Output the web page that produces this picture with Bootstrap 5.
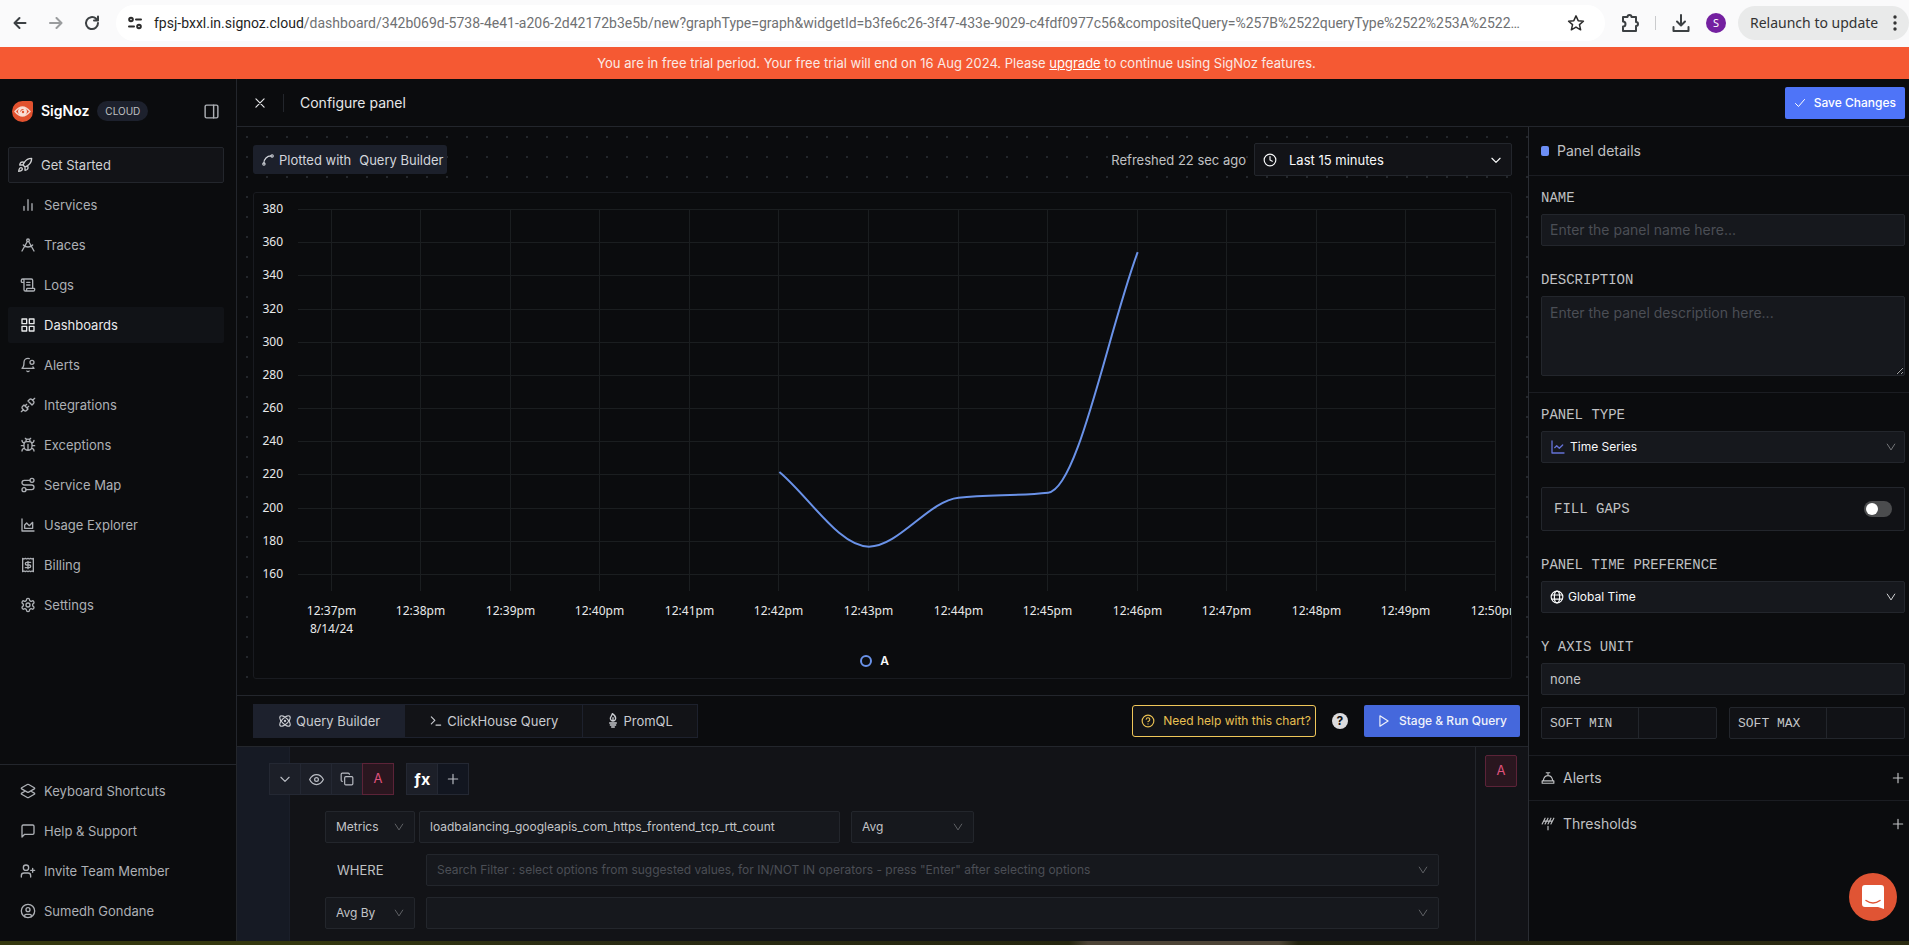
<!DOCTYPE html>
<html lang="en">
<head>
<meta charset="utf-8">
<meta name="viewport" content="width=device-width, initial-scale=1">
<title>SigNoz – Configure panel</title>
<link href="https://cdn.jsdelivr.net/npm/bootstrap@5.3.0/dist/css/bootstrap.min.css" rel="stylesheet">
<style>
:root{--ink:#0b0c0e;--slate:#121317;--field:#16181d;--line:#1d212d;--line2:#23262c;--txt:#c0c1c3;--robin:#4e74f8;--cherry:#e0527e}
body{font:14px/20px Inter,"Liberation Sans",sans-serif;color:var(--txt);background:var(--ink)}
.ic{fill:none;stroke:currentColor;stroke-width:2;stroke-linecap:round;stroke-linejoin:round;flex:none}
.t12{font-size:12px}
.t13{font-size:13px}
.mono{font-family:"Liberation Mono",monospace}
/* browser toolbar */
.browser{height:47px;padding-bottom:2px;background:#fafafb;color:#3c4043;font-family:"Noto Sans",sans-serif}
.navs{gap:20px}
.address{background:#fff;border-radius:18px;height:36px;color:#6f7173;min-width:0;font-family:Roboto,sans-serif}
.address .host{color:#1f1f1f}
.address svg{color:#2b2b2b}
.avatar{width:20px;height:20px;background:#7420a0;color:#fff;font-size:11px}
.relaunch{background:#e9eaea;border-radius:17px;height:34px;width:171px;padding:0 12px;color:#333;border:0;font-size:14px}
.trial{height:32px;background:#f55933;color:#fbeae5;font-size:13px}
.trial a{color:#fff}
/* sidebar */
.sidebar{width:237px;border-right:1px solid var(--line2)}
.brand{height:64px;color:#fff;font-weight:600;font-size:14px}
.cloud{background:#1d212d;border-radius:10px;font-size:10px;height:20px;color:#c0c1c3;font-weight:400}
.side-link{height:36px;color:#adb0b5;border-radius:2px;font-size:13px;text-decoration:none}
.side-link.on{background:#111317;color:#e9eaec}
.start{background:var(--slate);border:1px solid var(--line2);color:#d0d1d3}
.side-foot{border-top:1px solid var(--line2);padding:8px 8px 12px}
/* header */
.head{height:48px;border-bottom:1px solid var(--line2);color:#e6e7e9}
.flat{border-radius:2px;font-size:12px;line-height:20px;height:32px}
.save{background:var(--robin);color:#fff}
.run{background:#4568dc;color:#f0f2fa}
.close-x{background:none;border:0;color:#e6e7e9}
.head .bar{width:1px;height:18px;background:var(--line2)}
/* canvas */
.dots{background:radial-gradient(#24272c 1px,transparent 1px) 0 0/20px 20px}
.plotted{background:#1c202b;border-radius:3px;height:29px;font-size:13px;color:#d2d5db}
.range{width:258px;height:33px;background:var(--slate);border:1px solid var(--line2);border-radius:2px}
.chart{border:1px solid #191b20;background:var(--ink);border-radius:3px;height:487px;overflow:hidden}
.chart text{font:12px "Noto Sans",sans-serif;fill:#e8e9ea}
.ring{width:12px;height:12px;border:2px solid #6a92e8;border-radius:50%}
/* query area */
.qbar{height:52px;border-top:1px solid var(--line2);border-bottom:1px solid var(--line2)}
.tabs .btn{height:34px;border:1px solid var(--line);border-radius:0;background:var(--slate);color:#c9cbd0;font-size:13px;line-height:20px;margin-left:-1px}
.tabs .btn.on{background:#1d212d}
.needhelp{border:1px solid #f0c75a;color:#e9c052;background:var(--slate);border-radius:3px}
.qmark{width:16px;height:16px;background:#dcdcde;color:#111;font-size:12px;line-height:16px}
.query{background:var(--slate)}
.gutter{width:53px;background:#161a24;border-right:1px solid #1b1f2a}
.mini{width:32px;height:32px;padding:0;border:1px solid #242833;background:#1c1f28;color:#b9bcc3;border-radius:0;margin-left:-1px;display:flex;align-items:center;justify-content:center}
.mini.red,.tag{background:#2a161f;border:1px solid #5c2338;color:var(--cherry)}
.mini.plus{background:#121620}
.tag{width:32px;height:32px;border-radius:2px;padding:0;font-size:13px}
.rail{width:53px;border-left:1px solid var(--line2);padding:8px 0 0 9px}
.pull{margin-left:-20px;gap:13px}
.qrows{padding:16px 36px 0 35px;gap:11px}
.qline{gap:11px}
.fbox{border:1px solid var(--line2);background:var(--field);border-radius:2px;height:32px;color:#c3c5c8}
.fbox select,.fbox input{background:none;border:0;outline:0;color:inherit;appearance:none;min-width:0;font-size:inherit;padding:0}
.fbox select{cursor:pointer}
.fbox option{background:#16181d}
.query .fbox{font-size:12px;padding:0 10px}
.w-kind{width:90px}.w-agg{width:123px}.w-metric{width:421px}
.fbox input::placeholder,.fbox::placeholder{color:#4b4e55;opacity:1}
/* right panel */
.details{width:381px;border-left:1px solid #2a2d33}
.details .rule{border-bottom:1px solid #1b1d22}
.title{height:49px}
.fold{height:45px}
.dot{width:8px;height:10px;background:#6c8ef5;border-radius:2px}
.details label.mono{line-height:20px;display:block;margin-bottom:6px}
.gaps{height:44px;border:1px solid var(--line2);background:#111216;border-radius:2px}
textarea.fbox{height:80px;display:block;padding:6px 8px;outline:0;resize:vertical}
.sw.form-check-input{width:28px;height:16px;margin:0;background-color:#4b4c4e;border:0;background-image:url("data:image/svg+xml,%3Csvg xmlns='http://www.w3.org/2000/svg' viewBox='-4 -4 8 8'%3E%3Ccircle r='3' fill='%23fff'/%3E%3C/svg%3E")}
.soft{gap:12px;margin-top:12px}
.soft .fbox{flex:1 1 0;min-width:0;background:#111216}
.soft input{width:0}
.details label.softlab{border-right:1px solid var(--line2);width:89px;font-size:13px;margin:0;line-height:32px;height:30px;flex:none}
.bubble{width:48px;height:48px;right:12px;bottom:24px;background:#e05434;border:0}
.desk{height:4px;background:linear-gradient(90deg,#34380f 0,#34380f 16%,#2a2c14 30%,#25260f 56%,#4c4436 57%,#4c4436 67%,#22230f 68%,#2b2b12 100%)}
</style>
</head>
<body class="vh-100 overflow-hidden d-flex flex-column">

<svg class="d-none">
  <symbol id="down" viewBox="0 0 24 24"><path d="m5 9 7 7 7-7"/></symbol>
  <symbol id="anty" viewBox="0 0 24 24"><path d="m3 5 9 14 9-14"/></symbol>
  <symbol id="plus" viewBox="0 0 24 24"><path d="M4 12h16M12 4v16"/></symbol>
</svg>

<div class="browser d-flex align-items-center ps-2 flex-shrink-0">
  <div class="navs d-flex ms-1 me-3">
    <svg class="ic" width="16" height="16" viewBox="0 0 16 16"><path d="M13.500 8H3M7.500 3 2.500 8l5 5"/></svg>
    <svg class="ic" width="16" height="16" viewBox="0 0 16 16" opacity=".5"><path d="M2 8h11M8.500 3l5 5-5 5"/></svg>
    <svg class="ic" width="16" height="16" viewBox="0 0 16 16"><path d="M14 8a6 6 0 1 1-2-4.400L14 5.500M14 1.500v4h-4"/></svg>
  </div>
  <div class="address d-flex align-items-center flex-grow-1 ps-2 pe-3 me-3">
    <svg class="ic me-2 ms-1" width="14" height="14" viewBox="0 0 14 14"><circle cx="3" cy="3.500" r="1.800"/><path d="M8 3.500h5M1 10.500h5"/><circle cx="11" cy="10.500" r="1.800"/></svg>
    <div class="text-truncate flex-grow-1 ps-1"><span class="host">fpsj-bxxl.in.signoz.cloud</span>/dashboard/342b069d-5738-4e41-a206-2d42172b3e5b/new?graphType=graph&amp;widgetId=b3fe6c26-3f47-433e-9029-c4fdf0977c56&amp;compositeQuery=%257B%2522queryType%2522%253A%2522…</div>
    <svg class="ic ms-2 me-1" width="18" height="18" viewBox="0 0 24 24"><path d="m12 2.500 2.900 6.400 7 .7-5.300 4.600 1.600 6.900L12 17.500l-6.200 3.600 1.600-6.900L2.100 9.600l7-.7z"/></svg>
  </div>
  <svg class="ic me-3" width="18" height="20" viewBox="0 0 18 20"><path d="M2 4h4.500a2 2 0 0 1 4 0H15v5a2 2 0 0 1 0 4v5H2v-4.500a2.300 2.300 0 0 0 0-5z"/></svg>
  <div class="vr my-3 me-3 opacity-25"></div>
  <svg class="ic me-3" width="18" height="18" viewBox="0 0 18 18"><path d="M9 1v10M5 7.500l4 4 4-4M1.500 13v4h15v-4"/></svg>
  <div class="avatar rounded-circle d-flex align-items-center justify-content-center me-2">S</div>
  <button class="relaunch d-flex align-items-center justify-content-between ms-1 text-nowrap flex-shrink-0" type="button">
    <span>Relaunch to update</span>
    <svg width="4" height="16" viewBox="0 0 4 16" fill="#333"><circle cx="2" cy="2" r="1.700"/><circle cx="2" cy="8" r="1.700"/><circle cx="2" cy="14" r="1.700"/></svg>
  </button>
</div>

<div class="trial d-flex align-items-center justify-content-center flex-shrink-0 ps-1"><span>You are in free trial period. Your free trial will end on 16 Aug 2024. Please <a href="#">upgrade</a> to continue using SigNoz features.</span></div>

<div class="d-flex flex-grow-1" style="min-height:0">
  <nav class="sidebar d-flex flex-column flex-shrink-0">
    <div class="brand d-flex align-items-center ps-2 pe-3">
      <svg class="ms-1" width="21" height="21" viewBox="0 0 21 21"><path fill="#e2522f" d="M10.500 0H19a2 2 0 0 1 2 2v8.500A10.500 10.500 0 1 1 10.500 0z"/><path d="M3 10.500q7.500-9 15 0-7.500 9-15 0z" fill="#e2522f" stroke="#f7d5cb" stroke-width="1.400"/><circle cx="10.500" cy="10.500" r="4.500" fill="#f9dfd7"/><path d="M8.500 10.500a2.500 2.500 0 0 1 3-2" fill="none" stroke="#e2522f"/><circle cx="11" cy="11" r="1.200" fill="#e2522f"/></svg>
      <span class="ms-2">SigNoz</span>
      <span class="cloud px-2 ms-2 d-flex align-items-center">CLOUD</span>
      <svg class="ic ms-auto" width="17" height="17" viewBox="0 0 24 24" color="#adb0b5"><rect x="3" y="3" width="18" height="18" rx="2"/><path d="M15 3v18"/></svg>
    </div>
    <div class="px-2 pt-1 d-flex flex-column gap-1">
      <a href="#" class="side-link start d-flex align-items-center ps-2 me-1"><svg class="ic" width="16" height="16" viewBox="0 0 24 24"><path d="M4.500 16.500c-1.500 1.260-2 5-2 5s3.740-.5 5-2c.71-.84.7-2.130-.09-2.910a2.180 2.180 0 0 0-2.910-.09zM12 15l-3-3a22 22 0 0 1 2-3.950A12.880 12.880 0 0 1 22 2c0 2.720-.78 7.500-6 11a22.350 22.350 0 0 1-4 2zM9 12H4s.55-3.030 2-4c1.620-1.080 5 0 5 0M12 15v5s3.030-.55 4-2c1.080-1.620 0-5 0-5"/></svg><span class="ms-2">Get Started</span></a>
      <div id="menu" class="d-flex flex-column gap-1 me-1"></div>
    </div>
    <div id="foot" class="side-foot mt-auto d-flex flex-column gap-1"></div>
  </nav>

  <div class="flex-grow-1 d-flex flex-column" style="min-width:0">
    <header class="head d-flex align-items-center flex-shrink-0 ps-3 pe-1">
      <button class="close-x d-flex p-0" type="button" aria-label="Close"><svg class="ic" width="14" height="14" viewBox="0 0 24 24"><path d="m5 5 14 14M19 5 5 19"/></svg></button>
      <div class="bar ms-3"></div>
      <span class="ms-3">Configure panel</span>
      <button class="btn flat save ms-auto py-0 px-2 d-flex align-items-center gap-1 fw-medium" type="button"><svg class="ic me-1" width="12" height="12" viewBox="0 0 24 24"><path d="M3 13l6 6L21 5"/></svg>Save Changes</button>
    </header>

    <div class="d-flex flex-grow-1" style="min-height:0">
      <main class="flex-grow-1 d-flex flex-column" style="min-width:0">
        <section class="dots px-3 pt-3 pb-3 flex-shrink-0">
          <div class="d-flex align-items-center justify-content-between mb-3">
            <div class="plotted d-flex align-items-center ps-1 pe-1"><svg class="ic mx-1" width="14" height="14" viewBox="0 0 24 24"><circle cx="19" cy="5" r="2"/><circle cx="5" cy="19" r="2"/><path d="M5 17A12 12 0 0 1 17 5"/></svg>Plotted with<span class="ms-2">Query Builder</span></div>
            <div class="d-flex align-items-center gap-2 t13">
              <span>Refreshed 22 sec ago</span>
              <button type="button" class="range d-flex align-items-center px-2 text-light"><svg class="ic" width="14" height="14" viewBox="0 0 24 24"><circle cx="12" cy="12" r="10"/><path d="M12 6v6l4 2"/></svg><span class="ms-2 ps-1">Last 15 minutes</span><svg class="ic ms-auto" width="14" height="14"><use href="#down"/></svg></button>
            </div>
          </div>
          <div class="chart d-flex flex-column">
            <svg id="plot" width="100%" height="458"></svg>
            <div class="d-flex justify-content-center align-items-center gap-2 pe-3 fw-semibold t12 text-light"><span class="ring"></span>A</div>
          </div>
        </section>

        <div class="qbar d-flex align-items-center flex-shrink-0 ps-3 pe-2">
          <div class="tabs d-flex">
            <button type="button" class="btn on ms-0 px-4 py-0 d-flex align-items-center gap-1"><svg class="ic" width="14" height="14" viewBox="0 0 24 24"><circle cx="12" cy="12" r="1"/><path d="M20.200 20.200c2.040-2.030.02-7.360-4.500-11.900-4.540-4.520-9.870-6.540-11.900-4.500-2.040 2.030-.02 7.360 4.500 11.900 4.540 4.520 9.870 6.540 11.900 4.500ZM15.700 15.700c4.520-4.540 6.540-9.870 4.500-11.900-2.030-2.040-7.360-.02-11.900 4.500-4.520 4.540-6.540 9.870-4.500 11.900 2.030 2.040 7.360.02 11.900-4.500Z"/></svg>Query Builder</button>
            <button type="button" class="btn px-4 py-0 d-flex align-items-center gap-1"><svg class="ic" width="14" height="14" viewBox="0 0 24 24"><path d="m4 17 6-6-6-6M12 19h8"/></svg>ClickHouse Query</button>
            <button type="button" class="btn px-4 py-0 d-flex align-items-center gap-1"><svg class="ic" width="12" height="16" viewBox="0 0 18 24"><path d="M8 1c3 2 5 4 5 7 0 2-2 4-4 4s-4-2-4-4c0-2 2-3 3-7zM9 7v3M4 15h10M5 18h8M7 21h4"/></svg>PromQL</button>
          </div>
          <button type="button" class="btn flat needhelp ms-auto py-0 px-1 d-flex align-items-center"><svg class="ic mx-1" width="14" height="14" viewBox="0 0 24 24"><circle cx="12" cy="12" r="10"/><path d="M9 9a3 3 0 0 1 6 1c0 2-3 3-3 3M12 17h.01"/></svg><span class="ms-1">Need help with this chart?</span></button>
          <span class="qmark rounded-circle text-center fw-bold mx-3">?</span>
          <button type="button" class="btn flat run py-0 px-2 d-flex align-items-center fw-medium"><svg class="ic mx-1" width="14" height="14" viewBox="0 0 24 24"><path d="M5 3l14 9-14 9z"/></svg><span class="mx-1">Stage &amp; Run Query</span></button>
        </div>

        <section class="query d-flex flex-grow-1 overflow-hidden">
          <div class="gutter flex-shrink-0"></div>
          <div class="flex-grow-1 pt-3">
            <div class="d-flex pull">
              <div class="d-flex">
                <button type="button" class="btn mini" aria-label="Collapse"><svg class="ic" width="14" height="14"><use href="#down"/></svg></button>
                <button type="button" class="btn mini" aria-label="Hide"><svg class="ic" width="15" height="15" viewBox="0 0 24 24"><path d="M1 12s4-8 11-8 11 8 11 8-4 8-11 8S1 12 1 12z"/><circle cx="12" cy="12" r="3"/></svg></button>
                <button type="button" class="btn mini" aria-label="Copy"><svg class="ic" width="14" height="14" viewBox="0 0 24 24"><rect x="8" y="8" width="14" height="14" rx="2"/><path d="M4 16a2 2 0 0 1-2-2V4a2 2 0 0 1 2-2h10a2 2 0 0 1 2 2"/></svg></button>
                <button type="button" class="btn mini red t13">A</button>
              </div>
              <div class="d-flex">
                <button type="button" class="btn mini fw-bold text-white">ƒx</button>
                <button type="button" class="btn mini plus" aria-label="Add"><svg class="ic" width="14" height="14"><use href="#plus"/></svg></button>
              </div>
            </div>
            <div class="qrows d-flex flex-column">
              <div class="d-flex qline">
                <div class="d-flex gap-1">
                  <div class="fbox w-kind d-flex align-items-center"><select class="flex-grow-1" aria-label="Source"><option>Metrics</option></select><svg class="ic opacity-50" width="10" height="10"><use href="#anty"/></svg></div>
                  <div class="fbox w-metric d-flex align-items-center"><input class="w-100" aria-label="Metric" value="loadbalancing_googleapis_com_https_frontend_tcp_rtt_count"></div>
                </div>
                <div class="fbox w-agg d-flex align-items-center"><select class="flex-grow-1" aria-label="Aggregation"><option>Avg</option></select><svg class="ic opacity-50" width="10" height="10"><use href="#anty"/></svg></div>
              </div>
              <div class="d-flex qline align-items-center">
                <label for="where" class="w-kind ps-2 t13"><span class="ms-1">WHERE</span></label>
                <div class="fbox flex-grow-1 d-flex align-items-center"><input id="where" class="flex-grow-1" placeholder='Search Filter : select options from suggested values, for IN/NOT IN operators - press "Enter" after selecting options'><svg class="ic opacity-50" width="10" height="10"><use href="#anty"/></svg></div>
              </div>
              <div class="d-flex qline">
                <div class="fbox w-kind d-flex align-items-center"><select class="flex-grow-1" aria-label="Group"><option>Avg By</option></select><svg class="ic opacity-50" width="10" height="10"><use href="#anty"/></svg></div>
                <div class="fbox flex-grow-1 d-flex align-items-center"><input class="flex-grow-1" aria-label="Group by"><svg class="ic opacity-50" width="10" height="10"><use href="#anty"/></svg></div>
              </div>
            </div>
          </div>
          <div class="rail flex-shrink-0"><button type="button" class="btn tag">A</button></div>
        </section>
      </main>

      <aside class="details flex-shrink-0">
        <div class="rule title d-flex align-items-center gap-2 ps-2"><span class="dot ms-1"></span>Panel details</div>
        <div class="rule ps-2 pe-1 pb-3">
          <div class="ms-1 pt-2">
            <label class="mono mt-1" for="pname">NAME</label>
            <div class="fbox d-flex align-items-center px-2"><input id="pname" class="w-100" placeholder="Enter the panel name here..."></div>
            <label class="mono mt-4" for="pdesc">DESCRIPTION</label>
            <textarea id="pdesc" class="fbox w-100" placeholder="Enter the panel description here..."></textarea>
          </div>
        </div>
        <div class="rule ps-2 pe-1 pb-3">
          <div class="ms-1 pt-2">
            <label class="mono mt-1" for="ptype">PANEL TYPE</label>
            <div class="fbox d-flex align-items-center px-2 text-light t12"><svg class="ic me-1" width="16" height="16" viewBox="0 0 24 24" color="#6471d6"><path d="M3 3v18h18M19 9l-5 5-4-4-3 3"/></svg><select id="ptype" class="flex-grow-1"><option>Time Series</option></select><svg class="ic opacity-50" width="10" height="10"><use href="#anty"/></svg></div>
            <div class="gaps d-flex align-items-center justify-content-between px-2 mt-4"><label class="mono mb-0 ms-1" for="gapsw">FILL GAPS</label><div class="form-switch p-0 d-flex me-1"><input id="gapsw" class="form-check-input sw" type="checkbox" role="switch"></div></div>
            <label class="mono mt-4" for="ptime">PANEL TIME PREFERENCE</label>
            <div class="fbox d-flex align-items-center ps-2 pe-1 text-light t12"><svg class="ic me-1" width="14" height="14" viewBox="0 0 24 24"><circle cx="12" cy="12" r="10"/><ellipse cx="12" cy="12" rx="4.500" ry="10"/><path d="M3 8.500h18M3 15.500h18"/></svg><select id="ptime" class="flex-grow-1"><option>Global Time</option></select><svg class="ic me-1" width="10" height="10"><use href="#anty"/></svg></div>
            <label class="mono mt-4" for="yunit">Y AXIS UNIT</label>
            <div class="fbox d-flex align-items-center px-2 t13"><input id="yunit" class="w-100" value="none"></div>
            <div class="soft d-flex">
              <div class="fbox d-flex ps-2"><label class="mono softlab" for="smin">SOFT MIN</label><input id="smin" class="flex-grow-1"></div>
              <div class="fbox d-flex ps-2"><label class="mono softlab" for="smax">SOFT MAX</label><input id="smax" class="flex-grow-1"></div>
            </div>
          </div>
        </div>
        <div class="rule fold d-flex align-items-center ps-2 pe-1"><svg class="ic ms-1 me-2" width="14" height="14" viewBox="0 0 24 24"><path d="M2 17h20v4H2zM20 16c-1-5-4-8-8-8s-7 3-8 8M12 3v4M9 3h6"/></svg>Alerts<svg class="ic ms-auto" width="14" height="14"><use href="#plus"/></svg></div>
        <div class="fold d-flex align-items-center ps-2 pe-1"><svg class="ic ms-1 me-2" width="14" height="14" viewBox="0 0 24 24"><path d="M2 12 7 2M7 12l5-10M12 12l5-10M17 12l5-10M4.500 7h15M12 16v6"/></svg>Thresholds<svg class="ic ms-auto" width="14" height="14"><use href="#plus"/></svg></div>
      </aside>
    </div>
  </div>
</div>
<div class="desk flex-shrink-0"></div>

<button type="button" class="bubble rounded-circle position-fixed d-flex align-items-center justify-content-center" aria-label="Open chat"><svg width="22" height="24" viewBox="0 0 22 24"><path fill="#fff" d="M3 0h16a3 3 0 0 1 3 3v21l-6-2H3a3 3 0 0 1-3-3V3a3 3 0 0 1 3-3z"/><path d="M4 15.500q7 5 14 0" fill="none" stroke="#e05434" stroke-width="1.500" stroke-linecap="round"/></svg></button>

<script>
const C = (x, y, r) => `<circle cx="${x}" cy="${y}" r="${r}"/>`, P = d => `<path d="${d}"/>`;
const menu = [
  ["Services", P("M18 20V10M12 20V4M6 20v-6")],
  ["Traces", C(12,5,2) + P("m3 21 8-14.300M13 6.700 21 21M19 12c-3.870 4-10.130 4-14 0")],
  ["Logs", P("M15 12h-5M15 8h-5M19 17V5a2 2 0 0 0-2-2H4M8 21h12a2 2 0 0 0 2-2v-1a1 1 0 0 0-1-1H11a1 1 0 0 0-1 1v1a2 2 0 1 1-4 0V5a2 2 0 1 0-4 0v2a1 1 0 0 0 1 1h3")],
  ["Dashboards", P("M3 3h7v7H3zM14 3h7v7h-7zM14 14h7v7h-7zM3 14h7v7H3z")],
  ["Alerts", P("M19.400 14.900C20.200 16.400 21 17 21 17H3s3-2 3-9c0-3.300 2.700-6 6-6 .7 0 1.300.1 1.900.3M10.300 21a1.940 1.940 0 0 0 3.400 0") + C(18,8,3)],
  ["Integrations", P("m19 5 3-3M2 22l3-3M6.300 20.300a2.400 2.400 0 0 0 3.400 0L12 18l-6-6-2.300 2.300a2.400 2.400 0 0 0 0 3.400ZM7.500 13.500 10 11M10.500 16.500 13 14M12 6l6 6 2.300-2.300a2.400 2.400 0 0 0 0-3.400l-2.600-2.600a2.400 2.400 0 0 0-3.400 0Z")],
  ["Exceptions", P("m8 2 1.880 1.880M14.120 3.880 16 2M9 7.130v-1a3 3 0 1 1 6 0v1M12 20c-3.300 0-6-2.700-6-6v-3a4 4 0 0 1 4-4h4a4 4 0 0 1 4 4v3c0 3.300-2.700 6-6 6M12 20v-9M6.530 9C4.600 8.800 3 7.100 3 5M6 13H2M3 21c0-2.100 1.700-3.900 3.800-4M20.970 5c0 2.100-1.600 3.800-3.500 4M22 13h-4M17.200 17c2.100.1 3.800 1.900 3.800 4")],
  ["Service Map", C(6,19,3) + P("M9 19h8.500a3.500 3.500 0 0 0 0-7h-11a3.500 3.500 0 0 1 0-7H15") + C(18,5,3)],
  ["Usage Explorer", P("M3 3v18h18M7 12v5h12V8l-5 5-4-4Z")],
  ["Billing", P("M4 2v20l2-1 2 1 2-1 2 1 2-1 2 1 2-1 2 1V2l-2 1-2-1-2 1-2-1-2 1-2-1-2 1ZM16 8h-6a2 2 0 1 0 0 4h4a2 2 0 1 1 0 4H8M12 17.500v-11")],
  ["Settings", P("M12.220 2h-.44a2 2 0 0 0-2 2v.18a2 2 0 0 1-1 1.730l-.43.25a2 2 0 0 1-2 0l-.15-.08a2 2 0 0 0-2.730.73l-.22.38a2 2 0 0 0 .73 2.730l.15.1a2 2 0 0 1 1 1.720v.51a2 2 0 0 1-1 1.740l-.15.09a2 2 0 0 0-.73 2.730l.22.38a2 2 0 0 0 2.730.73l.15-.08a2 2 0 0 1 2 0l.43.25a2 2 0 0 1 1 1.730V20a2 2 0 0 0 2 2h.44a2 2 0 0 0 2-2v-.18a2 2 0 0 1 1-1.730l.43-.25a2 2 0 0 1 2 0l.15.08a2 2 0 0 0 2.730-.73l.22-.39a2 2 0 0 0-.73-2.730l-.15-.08a2 2 0 0 1-1-1.740v-.5a2 2 0 0 1 1-1.740l.15-.09a2 2 0 0 0 .73-2.730l-.22-.38a2 2 0 0 0-2.730-.73l-.15.08a2 2 0 0 1-2 0l-.43-.25a2 2 0 0 1-1-1.730V4a2 2 0 0 0-2-2z") + C(12,12,3)]
];
const foot = [
  ["Keyboard Shortcuts", P("m16.020 12 5.480 3.130a1 1 0 0 1 0 1.740L13 21.740a2 2 0 0 1-2 0l-8.500-4.870a1 1 0 0 1 0-1.740L7.980 12M13 13.740a2 2 0 0 1-2 0L2.500 8.870a1 1 0 0 1 0-1.740L11 2.260a2 2 0 0 1 2 0l8.500 4.870a1 1 0 0 1 0 1.740Z")],
  ["Help & Support", P("M21 15a2 2 0 0 1-2 2H7l-4 4V5a2 2 0 0 1 2-2h14a2 2 0 0 1 2 2z")],
  ["Invite Team Member", P("M16 21v-2a4 4 0 0 0-4-4H6a4 4 0 0 0-4 4v2M19 8v6M22 11h-6") + C(9,7,4)],
  ["Sumedh Gondane", C(12,12,10) + C(12,10,3) + P("M7 20.660V19a2 2 0 0 1 2-2h6a2 2 0 0 1 2 2v1.660")]
];
const link = ([name, icon]) => `<a href="#" class="side-link d-flex align-items-center ps-2${name === "Dashboards" ? " on" : ""}"><svg class="ic ms-1" width="16" height="16" viewBox="0 0 24 24">${icon}</svg><span class="ms-2">${name.replace("&", "&amp;")}</span></a>`;
document.getElementById("menu").innerHTML = menu.map(link).join("");
document.getElementById("foot").innerHTML = foot.map(link).join("");

/* time series: minutes after 12:00 and value */
const series = [[42, 221.5], [43, 176.5], [44, 206], [45, 209], [46, 354]];
function draw() {
  const svg = document.getElementById("plot"), W = svg.clientWidth, L = 44, R = W - 15, T = 16, B = 398;
  const px = m => L + (m - 36.626) / 13.374 * (R - L), py = v => T + (380 - v) * 365 / 220;
  let s = "";
  for (let v = 380; v >= 160; v -= 20) {
    const y = Math.round(py(v));
    s += `<path d="M${L} ${y + .5}H${R}" stroke="#1b1e20"/><text x="29" y="${y + 4}" text-anchor="end">${v}</text>`;
  }
  for (let m = 37; m <= 50; m++) {
    const x = Math.round(px(m)) - .5;
    s += `<path d="M${x} ${T}V${B}" stroke="#1b1e20"/><text x="${x}" y="422" text-anchor="middle">12:${m}pm</text>`;
  }
  s += `<text x="${px(37)}" y="440" text-anchor="middle">8/14/24</text>`;
  /* monotone cubic through the points */
  const n = series.length, sl = [], t = [];
  for (let i = 0; i < n - 1; i++) sl.push(series[i + 1][1] - series[i][1]);
  for (let i = 0; i < n; i++) t.push(i === 0 ? sl[0] : i === n - 1 ? sl[n - 2] : sl[i - 1] * sl[i] <= 0 ? 0 : 2 * sl[i - 1] * sl[i] / (sl[i - 1] + sl[i]));
  let d = `M${px(series[0][0])} ${py(series[0][1])}`;
  for (let i = 0; i < n - 1; i++) {
    const [a, u] = series[i], [b, v] = series[i + 1];
    d += `C${px(a + 1 / 3)} ${py(u + t[i] / 3)} ${px(b - 1 / 3)} ${py(v - t[i + 1] / 3)} ${px(b)} ${py(v)}`;
  }
  svg.innerHTML = s + `<path d="${d}" fill="none" stroke="#6a92e8" stroke-width="2"/>`;
}
draw();
addEventListener("resize", draw);
</script>
<script src="https://cdn.jsdelivr.net/npm/bootstrap@5.3.0/dist/js/bootstrap.bundle.min.js"></script>
</body>
</html>
